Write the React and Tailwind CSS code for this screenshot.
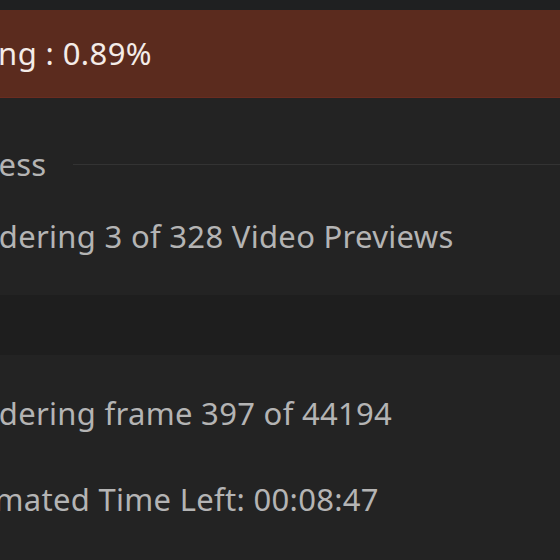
import React from "react";

const lines = [
  { label: "Rendering frame 397 of 44194" },
  { label: "Estimated Time Left: 00:08:47" },
];

const App = () => {
  return (
    <div className="w-[560px] h-[560px] overflow-hidden bg-[#232323] flex flex-col" style={{ fontFamily: '"Noto Sans", "Open Sans", sans-serif' }}>
      {/* Top strip */}
      <div className="h-[10px] bg-[#1f2021] shrink-0" />

      {/* Status bar */}
      <div className="h-[88px] shrink-0 bg-[#5b2b1e] border-b border-[#6a2c20] flex items-center">
        <span className="ml-[-118px] text-[31px] tracking-[0.4px] text-[#f4ece8] whitespace-nowrap">Rendering : 0.89%</span>
      </div>

      {/* Progress section */}
      <div className="h-[197px] shrink-0 flex flex-col">
        <div className="flex items-center mt-[48px] h-[36px]">
          <span className="ml-[-84px] text-[31px] tracking-[0.3px] text-[#b4b4b4] whitespace-nowrap">Progress</span>
          <div className="flex-1 h-px bg-[#333333] ml-[26px]" />
        </div>
        <div className="mt-[36px] h-[36px] flex items-center">
          <span className="ml-[-58px] text-[31px] tracking-[0.3px] text-[#b4b4b4] whitespace-nowrap">Rendering 3 of 328 Video Previews</span>
        </div>
      </div>

      {/* Divider band */}
      <div className="h-[60px] shrink-0 bg-[#1e1e1e]" />

      {/* Details */}
      <div className="flex-1 flex flex-col pt-[40px] gap-[50px]">
        {lines.map((l) => (
          <div key={l.label} className="h-[36px] flex items-center">
            <span className="ml-[-58px] text-[31px] tracking-[0.3px] text-[#b4b4b4] whitespace-nowrap">{l.label}</span>
          </div>
        ))}
      </div>
    </div>
  );
};

export default App;
